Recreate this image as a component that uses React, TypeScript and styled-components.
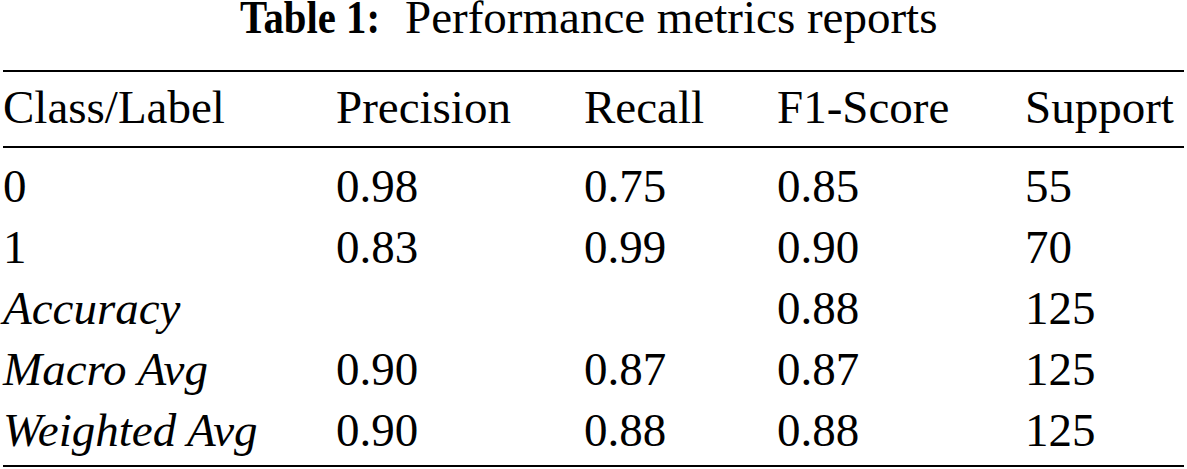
import React from "react";
import styled, { createGlobalStyle } from "styled-components";

const GlobalStyle = createGlobalStyle`
  html, body {
    margin: 0;
    padding: 0;
    background: #ffffff;
  }
  body {
    font-family: "Liberation Serif", "Times New Roman", serif;
    color: #000000;
  }
`;

const Page = styled.div`
  width: 1187px;
  height: 469px;
  display: flex;
  flex-direction: column;
  overflow: hidden;
`;

const Caption = styled.div`
  display: flex;
  justify-content: center;
  align-items: baseline;
  height: 70px;
  padding-right: 10px;
  font-size: 47px;
  line-height: 35px;
  white-space: nowrap;
`;

// the label in the source is set in a tighter bold cut
const CaptionLabel = styled.b`
  display: inline-block;
  font-weight: 700;
  transform: scaleX(0.867);
  transform-origin: left center;
  margin-right: -22px;
`;

const CaptionText = styled.span`
  margin-left: 26px;
`;

const Table = styled.div`
  margin: 0 3px;
  border-top: 2px solid #000;
  border-bottom: 2px solid #000;
`;

const Head = styled.div`
  padding-bottom: 4px;
  border-bottom: 2px solid #000;
`;

const Body = styled.div`
  padding: 8px 0 4px;
`;

const Row = styled.div<{ head?: boolean }>`
  display: grid;
  grid-template-columns: 333px 248px 193px 248px 1fr;
  font-size: 47px;
  line-height: ${({ head }) => (head ? "70px" : "61px")};
  height: ${({ head }) => (head ? "70px" : "61px")};
`;

const Cell = styled.div<{ italic?: boolean }>`
  font-style: ${({ italic }) => (italic ? "italic" : "normal")};
  white-space: nowrap;
`;

const header = ["Class/Label", "Precision", "Recall", "F1-Score", "Support"];

const rows: { label: string; italic?: boolean; values: string[] }[] = [
  { label: "0", values: ["0.98", "0.75", "0.85", "55"] },
  { label: "1", values: ["0.83", "0.99", "0.90", "70"] },
  { label: "Accuracy", italic: true, values: ["", "", "0.88", "125"] },
  { label: "Macro Avg", italic: true, values: ["0.90", "0.87", "0.87", "125"] },
  { label: "Weighted Avg", italic: true, values: ["0.90", "0.88", "0.88", "125"] },
];

const App = () => (
  <>
    <GlobalStyle />
    <Page>
      <Caption>
        <CaptionLabel>Table 1:</CaptionLabel>
        <CaptionText>Performance metrics reports</CaptionText>
      </Caption>
      <Table>
        <Head>
          <Row head>
            {header.map((h) => (
              <Cell key={h}>{h}</Cell>
            ))}
          </Row>
        </Head>
        <Body>
          {rows.map((r) => (
            <Row key={r.label}>
              <Cell italic={r.italic}>{r.label}</Cell>
              {r.values.map((v, i) => (
                <Cell key={i}>{v}</Cell>
              ))}
            </Row>
          ))}
        </Body>
      </Table>
    </Page>
  </>
);

export default App;
